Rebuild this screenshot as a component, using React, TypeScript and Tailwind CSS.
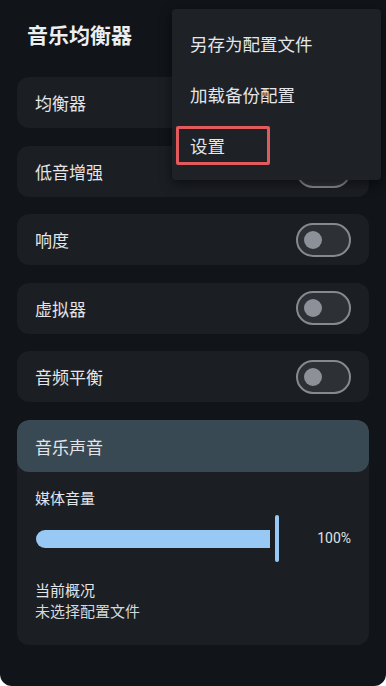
import React from 'react';

const FONT = '"Noto Sans CJK SC", "Noto Sans", Roboto, sans-serif';

const Toggle = () => (
  <div className="w-[55px] h-[34px] rounded-full border-2 border-[#868a90] bg-[#2d3035] flex items-center pl-[6px]">
    <div className="w-[18px] h-[18px] rounded-full bg-[#8c9098]" />
  </div>
);

const rows = ['均衡器', '低音增强', '响度', '虚拟器', '音频平衡'];
const menu = ['另存为配置文件', '加载备份配置', '设置'];

const App = () => {
  return (
    <div className="w-[386px] h-[686px] bg-white" style={{ fontFamily: FONT }}>
      <div className="relative w-full h-full bg-[#111418] rounded-b-[12px] px-[17px] text-[#e3e5e8]">
        {/* Title */}
        <div className="h-[68px] flex items-center pl-[10px]">
          <h1 className="text-[21px] font-bold text-[#eceef0] leading-none">音乐均衡器</h1>
        </div>

        {/* Toggle rows */}
        <div className="mt-[9px] flex flex-col gap-[17.5px]">
          {rows.map((r) => (
            <div key={r} className="h-[51px] rounded-[12px] bg-[#1b1e23] flex items-center justify-between pl-[18px] pr-[18px]">
              <span className="text-[17px] leading-none">{r}</span>
              <Toggle />
            </div>
          ))}
        </div>

        {/* Music sound card */}
        <div className="mt-[18px] rounded-[12px] bg-[#1b1e23] overflow-hidden">
          <div className="h-[52px] bg-[#394954] flex items-center pl-[18px] rounded-[12px]">
            <span className="text-[17px] leading-none">音乐声音</span>
          </div>
          <div className="px-[18px] pt-[15px] pb-[24px]">
            <div className="text-[15px] leading-[21px]">媒体音量</div>
            <div className="mt-[7px] h-[47px] flex items-center pl-[1px]">
              <div className="w-[234px] h-[18px] rounded-l-full rounded-r-[2px] bg-[#97c9f4]" />
              <div className="ml-[4.5px] w-[4px] h-[47px] rounded-full bg-[#97c9f4]" />
              <div className="flex-1 text-right text-[14px] text-[#dfe2e6]" style={{ fontFamily: 'Roboto, sans-serif' }}>
                100%
              </div>
            </div>
            <div className="mt-[16.5px] text-[15px] leading-[21px]">当前概况</div>
            <div className="text-[15px] leading-[21px] text-[#d5d8dc]">未选择配置文件</div>
          </div>
        </div>

        {/* Overflow menu */}
        <div className="absolute left-[172px] top-[9px] w-[209px] rounded-[4px] bg-[#1e2126] py-[9px] shadow-[0_4px_12px_rgba(0,0,0,0.5)]">
          {menu.map((m, i) => (
            <div key={m} className="relative h-[51px] flex items-center pl-[18px]">
              <span className="text-[17.5px] leading-none text-[#e4e6e9]">{m}</span>
              {i === 2 && (
                <div className="absolute left-[4px] top-[6px] w-[94px] h-[39px] border-[3px] border-[#e35a5c] rounded-[2px]" />
              )}
            </div>
          ))}
        </div>
      </div>
    </div>
  );
};

export default App;
